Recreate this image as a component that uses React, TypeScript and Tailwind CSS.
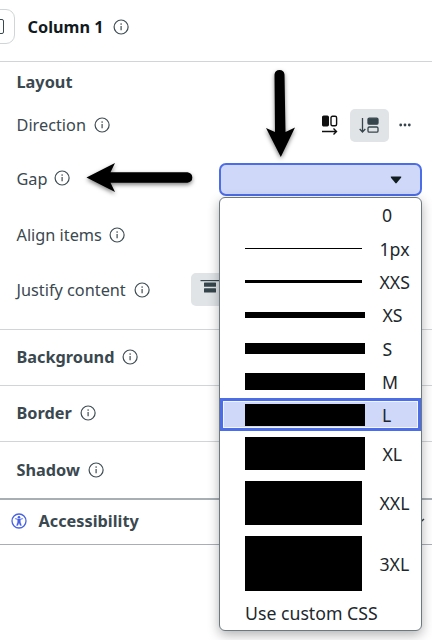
import React from 'react';

function Info({ className = '' }: { className?: string }) {
  return (
    <svg className={'h-4 w-4 shrink-0 ' + className} viewBox="0 0 16 16" fill="none" stroke="#3f4d54" strokeWidth="1.2">
      <circle cx="8.1" cy="8" r="7" />
      <path d="M8.1 7.1V11.2" strokeWidth="1.2" />
      <circle cx="8.1" cy="5.1" r="0.8" fill="#3f4d54" stroke="none" />
    </svg>
  );
}

function Row({ label, className, gap = 'gap-2', icon = '' }: { label: string; className: string; gap?: string; icon?: string }) {
  return (
    <div className={'flex items-center pl-[16.5px] whitespace-nowrap ' + gap + ' ' + className}>
      <span>{label}</span>
      <Info className={icon} />
    </div>
  );
}

const options = [
  { label: '0', row: 'h-[34px]', bar: '', pad: 'pl-[162px]' },
  { label: '1px', row: 'h-[33px]', bar: 'h-[1.5px] w-[117px]', pad: 'pl-[17.5px]' },
  { label: 'XXS', row: 'h-[33px]', bar: 'h-[3px] w-[117px]', pad: 'pl-[17.5px]' },
  { label: 'XS', row: 'h-[34px]', bar: 'h-[6px] w-[120px]', pad: 'pl-[17.5px]' },
  { label: 'S', row: 'h-[33px]', bar: 'h-[11.5px] w-[120px]', pad: 'pl-[17.5px]' },
  { label: 'M', row: 'h-[33px]', bar: 'h-[17px] w-[120px]', pad: 'pl-[17px]' },
  { label: 'L', row: 'h-[33px]', bar: 'h-[22px] w-[120px]', pad: 'pl-[17px]' },
  { label: 'XL', row: 'h-[45px]', bar: 'h-[33px] w-[120px]', pad: 'pl-[17.5px]' },
  { label: 'XXL', row: 'h-[54px]', bar: 'h-[44px] w-[117px]', pad: 'pl-[17.5px]' },
  { label: '3XL', row: 'h-[67px]', bar: 'h-[55px] w-[117px]', pad: 'pl-[17.5px]' },
];

function Menu() {
  return (
    <div className="absolute left-[219px] top-[197px] h-[434px] w-[203px] rounded-[6px] border border-[#6d7980] bg-white text-[17.7px] text-[#1d282d] shadow-[0_4px_12px_rgba(0,0,0,0.3)]">
      {options.map((o) => (
        <div key={o.label} className={'relative flex items-center ' + o.row + ' ' + (o.bar ? 'pl-[25px]' : '')}>
          {o.label === 'L' && (
            <div className="absolute inset-0 border-[3px] border-[#4c6de8] bg-[#d0d8f9] shadow-[inset_0_0_0_1px_#f4f6ff]" />
          )}
          {o.bar && <span className={'relative shrink-0 bg-black ' + o.bar} />}
          <span className={'relative pt-[2px] leading-none ' + o.pad}>{o.label}</span>
        </div>
      ))}
      <div className="flex h-[32px] items-center whitespace-nowrap pl-[25px]">Use custom CSS</div>
    </div>
  );
}

export default function App() {
  return (
    <div className="relative h-[640px] w-[432px] overflow-hidden bg-white font-['Noto_Sans',sans-serif] text-[16.3px] leading-6 text-[#3a484f]">
      <header className="flex h-[62px] items-center border-b border-[#cfd6d8] pb-[8px]">
        <div className="-ml-5 flex h-[35px] w-[35px] items-center justify-end rounded-[9px] border border-[#cfd6d8] pr-[10px]">
          <div className="h-[15px] w-[14px] rounded-[2px] border-[1.5px] border-[#3a484f]" />
        </div>
        <span className="ml-[12.5px] font-bold text-[#111a1e]">Column 1</span>
        <Info className="ml-[9px]" />
      </header>
      <section className="h-[268px] border-b border-[#cfd6d8] pt-2">
        <h2 className="h-6 pl-[16.5px] font-bold">Layout</h2>
        <div className="mt-[13px] flex h-[36px] items-center">
          <Row label="Direction" className="h-[36px]" />
          <div className="ml-auto flex items-center pr-[21px]">
            <svg className="mr-[12px] h-[20px] w-[16px]" viewBox="0 0 16 20" fill="none" stroke="#101010" strokeWidth="1.4">
              <rect x="0.7" y="1.2" width="5.6" height="9.6" rx="1" fill="#101010" />
              <rect x="9" y="1.2" width="5.6" height="9.6" rx="1.5" />
              <path d="M0 16.5H14.5M11.5 13.5L14.5 16.5L11.5 19.5" />
            </svg>
            <div className="flex h-[33px] w-[39px] items-center justify-center rounded-[5px] bg-[#e0e4e7]">
              <svg className="mr-px h-[17px] w-[20px]" viewBox="0 0 20 17" fill="none" stroke="#36454c" strokeWidth="1.3">
                <path d="M3.5 1V15M0.7 12L3.5 15L6.3 12" />
                <rect x="9" y="1.2" width="10" height="6" rx="1.3" fill="#36454c" />
                <rect x="9" y="10" width="10" height="5.2" rx="1.3" />
              </svg>
            </div>
            <svg className="ml-[10px] h-[4px] w-[12px]" viewBox="0 0 12 4" fill="#36454c">
              <circle cx="1.7" cy="2" r="1.4" />
              <circle cx="6" cy="2" r="1.4" />
              <circle cx="10.3" cy="2" r="1.4" />
            </svg>
          </div>
        </div>
        <div className="mt-[19px] flex h-[34px] items-center">
          <Row label="Gap" className="h-[34px]" gap="gap-[6px]" icon="mb-[2px]" />
          <div className="ml-auto mr-[10px] flex h-[33px] w-[203px] items-center justify-end rounded-[7px] border-2 border-[#4c6de8] bg-[#d0d8f9] pr-[18px]">
            <svg className="mt-[2px] h-[8px] w-[12px]" viewBox="0 0 12 8" fill="#111d20">
              <path d="M1.5 0.5H10.5Q12 0.5 11 1.8L6.7 7Q6 7.8 5.3 7L1 1.8Q0 0.5 1.5 0.5Z" />
            </svg>
          </div>
        </div>
        <Row label="Align items" className="mt-[27px] h-[24px]" gap="gap-[7px]" />
        <div className="mt-[26px] flex h-[33px] items-center">
          <Row label="Justify content" className="h-[33px]" />
          <div className="ml-[41px] h-[33px] w-[39px] rounded-[5px] bg-[#e0e4e7]">
            <svg className="ml-[9px] mt-[7px] h-[15px] w-[20px]" viewBox="0 0 20 15" fill="#36454c">
              <path d="M0.5 0H19.5V1.2H0.5Z" />
              <rect x="4" y="2.5" width="12" height="4.3" rx="0.5" />
              <rect x="4" y="8.3" width="12" height="4.3" rx="0.5" />
            </svg>
          </div>
        </div>
      </section>
      <Row label="Background" className="h-[56px] border-b border-[#cfd6d8] pb-px font-bold" />
      <Row label="Border" className="h-[56px] border-b border-[#cfd6d8] pb-px font-bold" />
      <Row label="Shadow" className="h-[58px] border-b-2 border-[#a7afb5] pb-px font-bold" />
      <section className="flex h-[45px] items-center border-b border-[#a7afb5] pb-[2px] pl-[11px] font-bold">
        <svg className="h-4 w-4" viewBox="0 0 16 16" fill="none" stroke="#4661e6" strokeWidth="1.3">
          <circle cx="8" cy="8" r="7" />
          <circle cx="8" cy="4.2" r="1.3" fill="#4661e6" stroke="none" />
          <path d="M4.2 6L6.6 6.5V9L5.5 12.5H6.8L8 9.8L9.2 12.5H10.5L9.4 9V6.5L11.8 6L11.6 5.4L9 5.9H7L4.4 5.4Z" fill="#4661e6" strokeWidth="0.3" />
        </svg>
        <span className="ml-[11.5px]">Accessibility</span>
        <svg className="ml-auto mr-[7px] h-[6px] w-[11px]" viewBox="0 0 11 6" fill="none" stroke="#36454c" strokeWidth="1.5">
          <path d="M1 1L5.5 5L10 1" />
        </svg>
      </section>
      <Menu />
      <svg className="absolute left-[260px] top-[65px] h-[100px] w-[44px] drop-shadow-[0_2px_2px_rgba(0,0,0,0.5)]" viewBox="0 0 44 100">
        <path d="M14.5 9.5Q15 5 19.5 5Q24 5 24.5 9.5L25.5 67L35 62.5L20.8 92L6 63L15 67Z" fill="black" />
      </svg>
      <svg className="absolute left-[80px] top-[155px] h-[46px] w-[118px] drop-shadow-[0_2px_2px_rgba(0,0,0,0.5)]" viewBox="0 0 118 46">
        <path d="M6.5 22.5L35 8L30.5 17.2H107.5Q112.3 18 112.3 22.5Q112.3 27 107.5 27.7H30.5L35 37Z" fill="black" />
      </svg>
    </div>
  );
}
